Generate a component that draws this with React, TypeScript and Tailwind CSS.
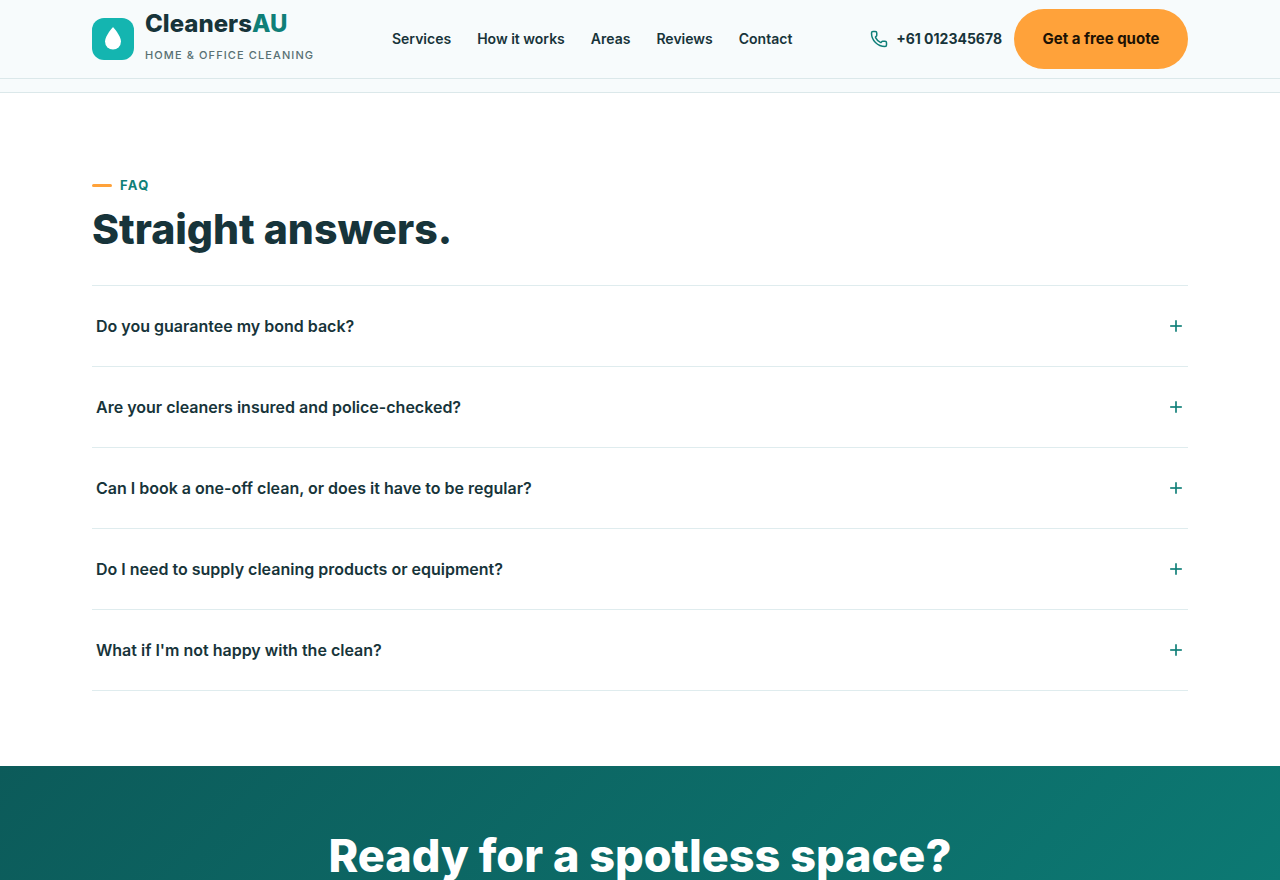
import React, { useState } from 'react';
import { Phone, Plus } from 'lucide-react';

const NAV_LINKS = [
  { label: 'Services', href: '#services' },
  { label: 'How it works', href: '#how' },
  { label: 'Areas', href: '#areas' },
  { label: 'Reviews', href: '#reviews' },
  { label: 'Contact', href: '#contact' },
];

const QUESTIONS = [
  'Do you guarantee my bond back?',
  'Are your cleaners insured and police-checked?',
  'Can I book a one-off clean, or does it have to be regular?',
  'Do I need to supply cleaning products or equipment?',
  "What if I'm not happy with the clean?",
];

const Logo: React.FC = () => (
  <a href="#top" className="flex items-center gap-[11px]">
    <span className="flex h-[42px] w-[42px] items-center justify-center rounded-xl bg-[#14b5b0]">
      <svg width="16" height="24" viewBox="0 0 16 24" fill="#ffffff" aria-hidden="true">
        <path d="M8 0C8 0 0 8.800 0 14.600a8 8 0 0 0 16 0C16 8.800 8 0 8 0z" />
      </svg>
    </span>
    <span className="flex flex-col">
      <span className="text-2xl leading-8 font-extrabold text-[#17343a]">
        Cleaners<span className="text-[#0f7f78]">AU</span>
      </span>
      <span className="text-[11px] leading-[30px] font-medium tracking-widest text-[#587073] uppercase">
        Home &amp; Office Cleaning
      </span>
    </span>
  </a>
);

const Header: React.FC = () => (
  <header className="sticky top-0 z-10 border-b border-[#dbe8ea] bg-[#f7fbfc]">
    <div className="mx-auto flex h-[78px] max-w-[1144px] items-center justify-between px-6">
      <Logo />
      <nav className="flex items-center gap-[26px] text-sm font-semibold text-[#17343a]">
        {NAV_LINKS.map((link) => (
          <a key={link.label} href={link.href} className="hover:text-[#0f7f78]">{link.label}</a>
        ))}
      </nav>
      <div className="flex items-center gap-3">
        <a href="tel:+61012345678" className="flex items-center gap-2 text-sm font-bold text-[#17343a]">
          <Phone size={18} strokeWidth={2} className="text-[#0f7f78]" />
          +61 012345678
        </a>
        <a href="#quote" className="flex h-[60px] w-[174px] items-center justify-center rounded-full bg-[#ffa23a] text-[15px] font-bold text-[#1d1204]">
          Get a free quote
        </a>
      </div>
    </div>
  </header>
);

const Faq: React.FC = () => {
  const [active, setActive] = useState<number | null>(null);

  return (
    <section className="bg-white pt-20 pb-[75px]">
      <div className="mx-auto max-w-[1144px] px-6">
        <p className="flex items-center gap-2 text-[13px] leading-6 font-bold tracking-widest text-[#0f7f78] uppercase">
          <span className="h-[3px] w-5 rounded-full bg-[#ffa23a]" />
          FAQ
        </p>
        <h2 className="mt-2 text-[41px] leading-[48px] font-extrabold text-[#17343a]">Straight answers.</h2>
        <div className="mt-8 border-t border-[#dfecee]">
          {QUESTIONS.map((question, i) => (
            <div key={question} className="border-b border-[#dfecee]">
              <button
                type="button"
                aria-expanded={active === i}
                onClick={() => setActive(active === i ? null : i)}
                className="flex h-20 w-full cursor-pointer items-center justify-between pr-0.5 pl-1 text-left text-base font-semibold text-[#17343a]"
              >
                {question}
                <Plus size={20} strokeWidth={2} strokeLinecap="butt" className="text-[#0f7f78]" />
              </button>
            </div>
          ))}
        </div>
      </div>
    </section>
  );
};

const App: React.FC = () => {
  return (
    <div id="top" className="flex h-screen flex-col overflow-hidden bg-white font-['Inter',sans-serif]">
      <Header />
      {/* tail of the areas band above the questions */}
      <div className="h-3.5 shrink-0 border-b border-[#dbe8ea] bg-[#f7fbfc]" />
      <Faq />
      <section className="flex-1 bg-linear-135 from-[#0c5b5a] to-[#0c7973] px-6 pt-16 text-center">
        <h2 className="text-[45px] leading-[52px] font-extrabold text-white">Ready for a spotless space?</h2>
      </section>
    </div>
  );
};

export default App;
